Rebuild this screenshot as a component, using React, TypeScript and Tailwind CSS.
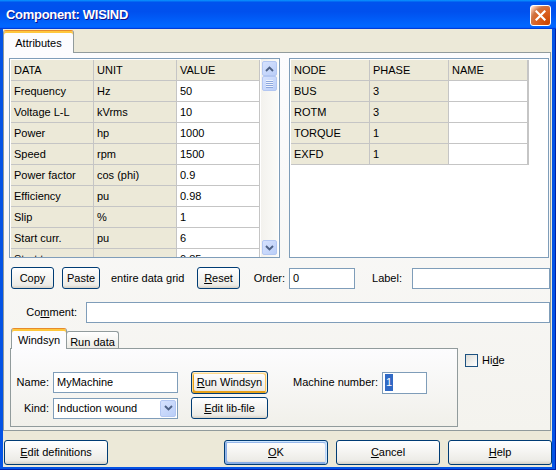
import React from 'react';

const F = "font-['Liberation_Sans',Arial,sans-serif]";

type Kind = 'normal' | 'default' | 'focus';

function XpButton({ children, className = '', kind = 'normal' }: { children: React.ReactNode; className?: string; kind?: Kind }) {
  const ring =
    kind === 'default'
      ? 'shadow-[inset_-1px_1px_#cee7ff,inset_1px_2px_#98b8ea,inset_-2px_2px_#bcd4f6,inset_1px_-1px_#89ade4,inset_2px_-2px_#89ade4]'
      : kind === 'focus'
      ? 'shadow-[inset_-1px_1px_#fff0cf,inset_1px_2px_#fdd889,inset_-2px_2px_#fbc761,inset_2px_-2px_#e5a01a]'
      : '';
  return (
    <div
      className={`flex shrink-0 items-center justify-center rounded-[3px] border border-[#003C74] bg-[linear-gradient(180deg,#ffffff,#ecebe6_86%,#d6d0c5)] text-[11px] text-black ${ring} ${className}`}
    >
      {children}
    </div>
  );
}

function ArrowBtn({ dir, className = '' }: { dir: 'up' | 'down'; className?: string }) {
  return (
    <div
      className={`flex shrink-0 items-center justify-center rounded-[2px] border border-[#B3C7F2] bg-[linear-gradient(135deg,#D6E2FE,#BACEF8)] ${className}`}
    >
      <svg width="9" height="6" viewBox="0 0 9 6">
        <polyline
          points={dir === 'up' ? '1,5 4.5,1.5 8,5' : '1,1 4.5,4.5 8,1'}
          fill="none"
          stroke="#4D6185"
          strokeWidth="1.9"
        />
      </svg>
    </div>
  );
}

function Scrollbar() {
  return (
    <div className="flex w-[17px] shrink-0 flex-col bg-[linear-gradient(90deg,#F3F2EE,#FBFBF8)] px-px py-[2px]">
      <ArrowBtn dir="up" className="h-[15px]" />
      <div className="flex h-[15px] shrink-0 items-center justify-center rounded-[2px] border border-[#B3C7F2] bg-[linear-gradient(135deg,#D6E2FE,#BACEF8)]">
        <svg width="7" height="8" viewBox="0 0 7 8">
          <line x1="0" y1="0.5" x2="7" y2="0.5" stroke="#EEF4FE" />
          <line x1="0" y1="1.5" x2="7" y2="1.5" stroke="#8CA6DD" />
          <line x1="0" y1="2.5" x2="7" y2="2.5" stroke="#EEF4FE" />
          <line x1="0" y1="3.5" x2="7" y2="3.5" stroke="#8CA6DD" />
          <line x1="0" y1="4.5" x2="7" y2="4.5" stroke="#EEF4FE" />
          <line x1="0" y1="5.5" x2="7" y2="5.5" stroke="#8CA6DD" />
          <line x1="0" y1="6.5" x2="7" y2="6.5" stroke="#EEF4FE" />
          <line x1="0" y1="7.5" x2="7" y2="7.5" stroke="#8CA6DD" />
        </svg>
      </div>
      <div className="flex-1" />
      <ArrowBtn dir="down" className="h-[15px]" />
    </div>
  );
}

const dataRows: string[][] = [
  ['DATA', 'UNIT', 'VALUE'],
  ['Frequency', 'Hz', '50'],
  ['Voltage L-L', 'kVrms', '10'],
  ['Power', 'hp', '1000'],
  ['Speed', 'rpm', '1500'],
  ['Power factor', 'cos (phi)', '0.9'],
  ['Efficiency', 'pu', '0.98'],
  ['Slip', '%', '1'],
  ['Start curr.', 'pu', '6'],
  ['Start torque', 'pu', '0.85'],
];

const nodeRows: string[][] = [
  ['NODE', 'PHASE', 'NAME'],
  ['BUS', '3', ''],
  ['ROTM', '3', ''],
  ['TORQUE', '1', ''],
  ['EXFD', '1', ''],
];

function Cell({ text, white }: { text: string; white: boolean }) {
  return (
    <div
      className={`flex items-center overflow-hidden whitespace-nowrap pl-[3px] text-[11px] leading-none text-black ${
        white ? 'bg-white' : 'bg-[#ECE9D8]'
      }`}
    >
      {text}
    </div>
  );
}

function Input({ className = '', children }: { className?: string; children?: React.ReactNode }) {
  return (
    <div className={`flex shrink-0 items-center border border-[#7F9DB9] bg-white pl-[3px] text-[11px] text-black ${className}`}>
      {children}
    </div>
  );
}

export default function App() {
  return (
    <div className={`${F} flex h-[470px] w-[556px] flex-col overflow-hidden bg-[#0453E4] shadow-[inset_-1px_-1px_0_#0020A8] select-none`}>
      {/* Title bar */}
      <div className="flex h-[29px] shrink-0 items-start bg-[linear-gradient(180deg,#0997ff,#0053ee_8%,#0050ee_40%,#0066ff_88%,#0066ff_93%,#005bff_95%,#003dd7_96%,#003dd7)]">
        <div className="ml-[6px] mt-[7px] text-[13px] font-bold leading-[15px] tracking-[-0.3px] text-white [text-shadow:1px_1px_#0F1089]">
          Component: WISIND
        </div>
        <div className="flex-1" />
        <div className="mr-[5px] mt-[5px] flex h-[21px] w-[21px] items-center justify-center rounded-[3px] border border-white bg-[radial-gradient(circle_at_90%_90%,#cc4600_0%,#dc6527_55%,#cd7546_70%,#ffccb2_90%,#ffffff_100%)]">
          <svg width="11" height="11" viewBox="0 0 11 11">
            <path d="M1.5 1.5 L9.5 9.5 M9.5 1.5 L1.5 9.5" stroke="#ffffff" strokeWidth="2.2" strokeLinecap="square" />
          </svg>
        </div>
      </div>

      {/* Body */}
      <div className="ml-[3px] mr-[4px] flex h-[438px] w-[549px] flex-col bg-[#ECE9D8]">
        {/* Tab strip */}
        <div className="flex h-[23px] shrink-0 items-start">
          <div className="relative z-10 mt-px flex h-[23px] w-[71px] items-start justify-center rounded-t-[3px] border border-b-0 border-[#919B9C] border-t-[#E68B2C] bg-[#FCFCFE] pt-[4px] text-[11px] text-black shadow-[inset_0_2px_0_#FFC73C]">
            Attributes
          </div>
        </div>

        {/* Attributes panel */}
        <div className="flex h-[379px] w-[548px] shrink-0 flex-col border border-[#919B9C] bg-[linear-gradient(180deg,#FCFCFE,#F4F3EE)]">
          {/* Grids */}
          <div className="ml-[5px] mt-[5px] flex">
            <div className="flex h-[200px] w-[271px] border border-[#7F9DB9] bg-white">
              <div className="h-full overflow-hidden pl-px pt-px">
                <div className="grid w-[249px] auto-rows-[20px] grid-cols-[82px_82px_82px] gap-px bg-[#C5C5C5] pr-px pb-px">
                  {dataRows.map((r, i) =>
                    r.map((t, j) => <Cell key={`${i}-${j}`} text={t} white={i > 0 && j === 2} />)
                  )}
                </div>
              </div>
              <div className="w-px shrink-0" />
              <Scrollbar />
            </div>
            <div className="ml-[9px] flex h-[200px] w-[260px] border border-[#7F9DB9] bg-white">
              <div className="h-full overflow-hidden pl-px pt-px">
                <div className="grid w-[238px] auto-rows-[20px] grid-cols-[78px_78px_78px] gap-px bg-[#C5C5C5] pr-px pb-px">
                  {nodeRows.map((r, i) =>
                    r.map((t, j) => <Cell key={`${i}-${j}`} text={t} white={i > 0 && j === 2} />)
                  )}
                </div>
              </div>
            </div>
          </div>

          {/* Buttons row */}
          <div className="mt-[9px] flex h-[22px] items-center text-[11px] text-black">
            <XpButton className="ml-[7px] h-[22px] w-[43px]">Copy</XpButton>
            <XpButton className="ml-[8px] h-[22px] w-[38px]">Paste</XpButton>
            <span className="ml-[11px] w-[86px] shrink-0 whitespace-nowrap">entire data grid</span>
            <XpButton className="h-[22px] w-[43px]">
              <span>
                <u>R</u>eset
              </span>
            </XpButton>
            <span className="w-[45px] shrink-0 text-right">Order:</span>
            <Input className="ml-[4px] h-[21px] w-[66px]">0</Input>
            <span className="w-[47px] shrink-0 text-right">Label:</span>
            <Input className="ml-[10px] h-[21px] w-[138px]" />
          </div>

          {/* Comment row */}
          <div className="mt-[13px] flex h-[21px] items-center text-[11px] text-black">
            <span className="w-[73px] shrink-0 text-right">
              Co<u>m</u>ment:
            </span>
            <Input className="ml-[9px] h-[21px] w-[464px]" />
          </div>

          {/* Windsyn area + Hide */}
          <div className="mt-[5px] flex">
            <div className="ml-[6px] flex w-[448px] flex-col">
              <div className="flex h-[20px] items-end pl-px">
                <div className="relative z-10 -mb-px flex h-[21px] w-[56px] items-start justify-center rounded-t-[3px] border border-b-0 border-[#919B9C] border-t-[#E68B2C] bg-[#FCFCFE] pt-[3px] text-[11px] text-black shadow-[inset_0_2px_0_#FFC73C]">
                  Windsyn
                </div>
                <div className="-ml-px flex h-[17px] w-[53px] items-start justify-center rounded-t-[3px] border border-b-0 border-[#919B9C] bg-[linear-gradient(180deg,#ffffff,#ECEBE5)] pt-[2px] text-[11px] text-black">
                  Run data
                </div>
              </div>
              <div className="flex h-[79px] flex-col border border-[#919B9C] bg-[linear-gradient(180deg,#FCFCFE,#F1F0EA)] text-[11px] text-black">
                <div className="mt-[22px] flex h-[23px] items-center">
                  <span className="w-[38px] shrink-0 text-right">Name:</span>
                  <Input className="ml-[4px] h-[21px] w-[125px]">MyMachine</Input>
                  <XpButton kind="focus" className="ml-[13px] h-[23px] w-[77px]">
                    <span>
                      <u>R</u>un Windsyn
                    </span>
                  </XpButton>
                  <span className="w-[110px] shrink-0 text-right">Machine number:</span>
                  <Input className="ml-[4px] h-[22px] w-[45px] !pl-[2px]">
                    <span className="bg-[#316AC5] px-px text-white">1</span>
                  </Input>
                </div>
                <div className="mt-[3px] flex h-[22px] items-center">
                  <span className="w-[38px] shrink-0 text-right">Kind:</span>
                  <div className="ml-[4px] flex h-[21px] w-[125px] shrink-0 items-center border border-[#7F9DB9] bg-white pl-[3px]">
                    <span className="flex-1">Induction wound</span>
                    <ArrowBtn dir="down" className="mr-px h-[17px] w-[16px]" />
                  </div>
                  <XpButton className="ml-[13px] h-[22px] w-[77px]">
                    <span>
                      <u>E</u>dit lib-file
                    </span>
                  </XpButton>
                </div>
              </div>
            </div>
            <div className="ml-[7px] mt-[26px] flex h-[13px] items-center text-[11px] text-black">
              <div className="h-[13px] w-[13px] shrink-0 border border-[#1C5180] bg-[linear-gradient(135deg,#DCDCD7,#ffffff)]" />
              <span className="ml-[4px]">
                Hi<u>d</u>e
              </span>
            </div>
          </div>
        </div>

        {/* Bottom buttons */}
        <div className="mt-[9px] flex items-center text-[11px]">
          <XpButton className="ml-px h-[25px] w-[104px]">
            <span>
              <u>E</u>dit definitions
            </span>
          </XpButton>
          <XpButton kind="default" className="ml-[116px] h-[25px] w-[104px]">
            <span>
              <u>O</u>K
            </span>
          </XpButton>
          <XpButton className="ml-[8px] h-[25px] w-[104px]">
            <span>
              <u>C</u>ancel
            </span>
          </XpButton>
          <XpButton className="ml-[8px] h-[25px] w-[104px]">
            <span>
              <u>H</u>elp
            </span>
          </XpButton>
        </div>
      </div>
    </div>
  );
}
